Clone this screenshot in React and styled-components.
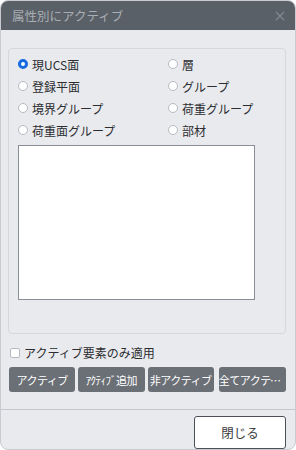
import React from 'react';
import styled, { createGlobalStyle } from 'styled-components';

const GlobalStyle = createGlobalStyle`
  html, body {
    margin: 0;
    padding: 0;
    background: #ffffff;
  }
  body {
    font-family: "Noto Sans CJK JP", "Noto Sans", sans-serif;
  }
`;

const Window = styled.div`
  width: 296px;
  height: 450px;
  box-sizing: border-box;
  border: 1px solid #c9cbd0;
  border-radius: 8px;
  background: #e9eaee;
  overflow: hidden;
  display: flex;
  flex-direction: column;
`;

const TitleBar = styled.div`
  height: 29px;
  flex: none;
  background: #596067;
  display: flex;
  align-items: center;
  justify-content: space-between;
  padding: 0 10px 0 11px;
`;

const Title = styled.span`
  color: #a9aeb4;
  font-size: 12.5px;
`;

const Body = styled.div`
  flex: 1;
  display: flex;
  flex-direction: column;
  padding: 18px 9px 0 7px;
`;

const GroupBox = styled.div`
  height: 286px;
  box-sizing: border-box;
  border: 1px solid #d5d7db;
  border-radius: 4px;
  padding: 4px 0 0 9px;
`;

const RadioGrid = styled.div`
  display: grid;
  grid-template-columns: 150px 1fr;
  grid-auto-rows: 22px;
`;

const RadioRow = styled.label`
  display: flex;
  align-items: center;
  gap: 4px;
  font-size: 12px;
  color: #2b2d31;
`;

const RadioDot = styled.span`
  width: 10px;
  height: 10px;
  border-radius: 50%;
  box-sizing: border-box;
  background: #ffffff;
  border: ${p => (p.$on ? '3px solid #1769e0' : '1px solid #b6bac0')};
`;

const ListBox = styled.div`
  margin-top: 4px;
  width: 237px;
  height: 155px;
  box-sizing: border-box;
  background: #ffffff;
  border: 1px solid #8a8d96;
`;

const CheckRow = styled.label`
  display: flex;
  align-items: center;
  gap: 4px;
  margin: 10px 0 0 2px;
  font-size: 12px;
  color: #2b2d31;
`;

const CheckBox = styled.span`
  width: 10px;
  height: 10px;
  box-sizing: border-box;
  background: #ffffff;
  border: 1px solid #b6bac0;
  border-radius: 2px;
`;

const ButtonRow = styled.div`
  display: flex;
  gap: 3px;
  margin-top: 6px;
  padding-left: 1px;
`;

const ActionButton = styled.button`
  width: ${p => p.$w || 67}px;
  height: 25px;
  padding: 0;
  margin-left: ${p => p.$gap || 0}px;
  border: none;
  border-radius: 3px;
  background: #6b6f76;
  color: #ffffff;
  font-family: inherit;
  font-size: 11px;
  letter-spacing: -0.5px;
  white-space: nowrap;
  overflow: hidden;
  text-overflow: ellipsis;
`;

const Footer = styled.div`
  margin-top: 10px;
  border-top: 1px solid #c3c6ca;
  display: flex;
  justify-content: flex-end;
  padding: 6px 9px 0 0;
`;

const CloseButton = styled.button`
  width: 92px;
  height: 33px;
  background: #ffffff;
  border: 1px solid #4d5157;
  border-radius: 3px;
  font-family: inherit;
  font-size: 12.5px;
  color: #3a3c40;
`;

const radios = [
  ['現UCS面', true],
  ['層', false],
  ['登録平面', false],
  ['グループ', false],
  ['境界グループ', false],
  ['荷重グループ', false],
  ['荷重面グループ', false],
  ['部材', false],
];

function App() {
  return (
    <>
      <GlobalStyle />
      <Window>
        <TitleBar>
          <Title>属性別にアクティブ</Title>
          <svg width="10" height="10" viewBox="0 0 10 10">
            <path d="M1 1 L9 9 M9 1 L1 9" stroke="#848a91" strokeWidth="1.1" />
          </svg>
        </TitleBar>
        <Body>
          <GroupBox>
            <RadioGrid>
              {radios.map(([label, on]) => (
                <RadioRow key={label}>
                  <RadioDot $on={on} />
                  {label}
                </RadioRow>
              ))}
            </RadioGrid>
            <ListBox />
          </GroupBox>
          <CheckRow>
            <CheckBox />
            アクティブ要素のみ適用
          </CheckRow>
          <ButtonRow>
            <ActionButton>アクティブ</ActionButton>
            <ActionButton>ｱｸﾃｨﾌﾞ追加</ActionButton>
            <ActionButton>非アクティブ</ActionButton>
            <ActionButton $w={68} $gap={2}>全てアクティブ</ActionButton>
          </ButtonRow>
        </Body>
        <Footer>
          <CloseButton>閉じる</CloseButton>
        </Footer>
      </Window>
    </>
  );
}

export default App;
